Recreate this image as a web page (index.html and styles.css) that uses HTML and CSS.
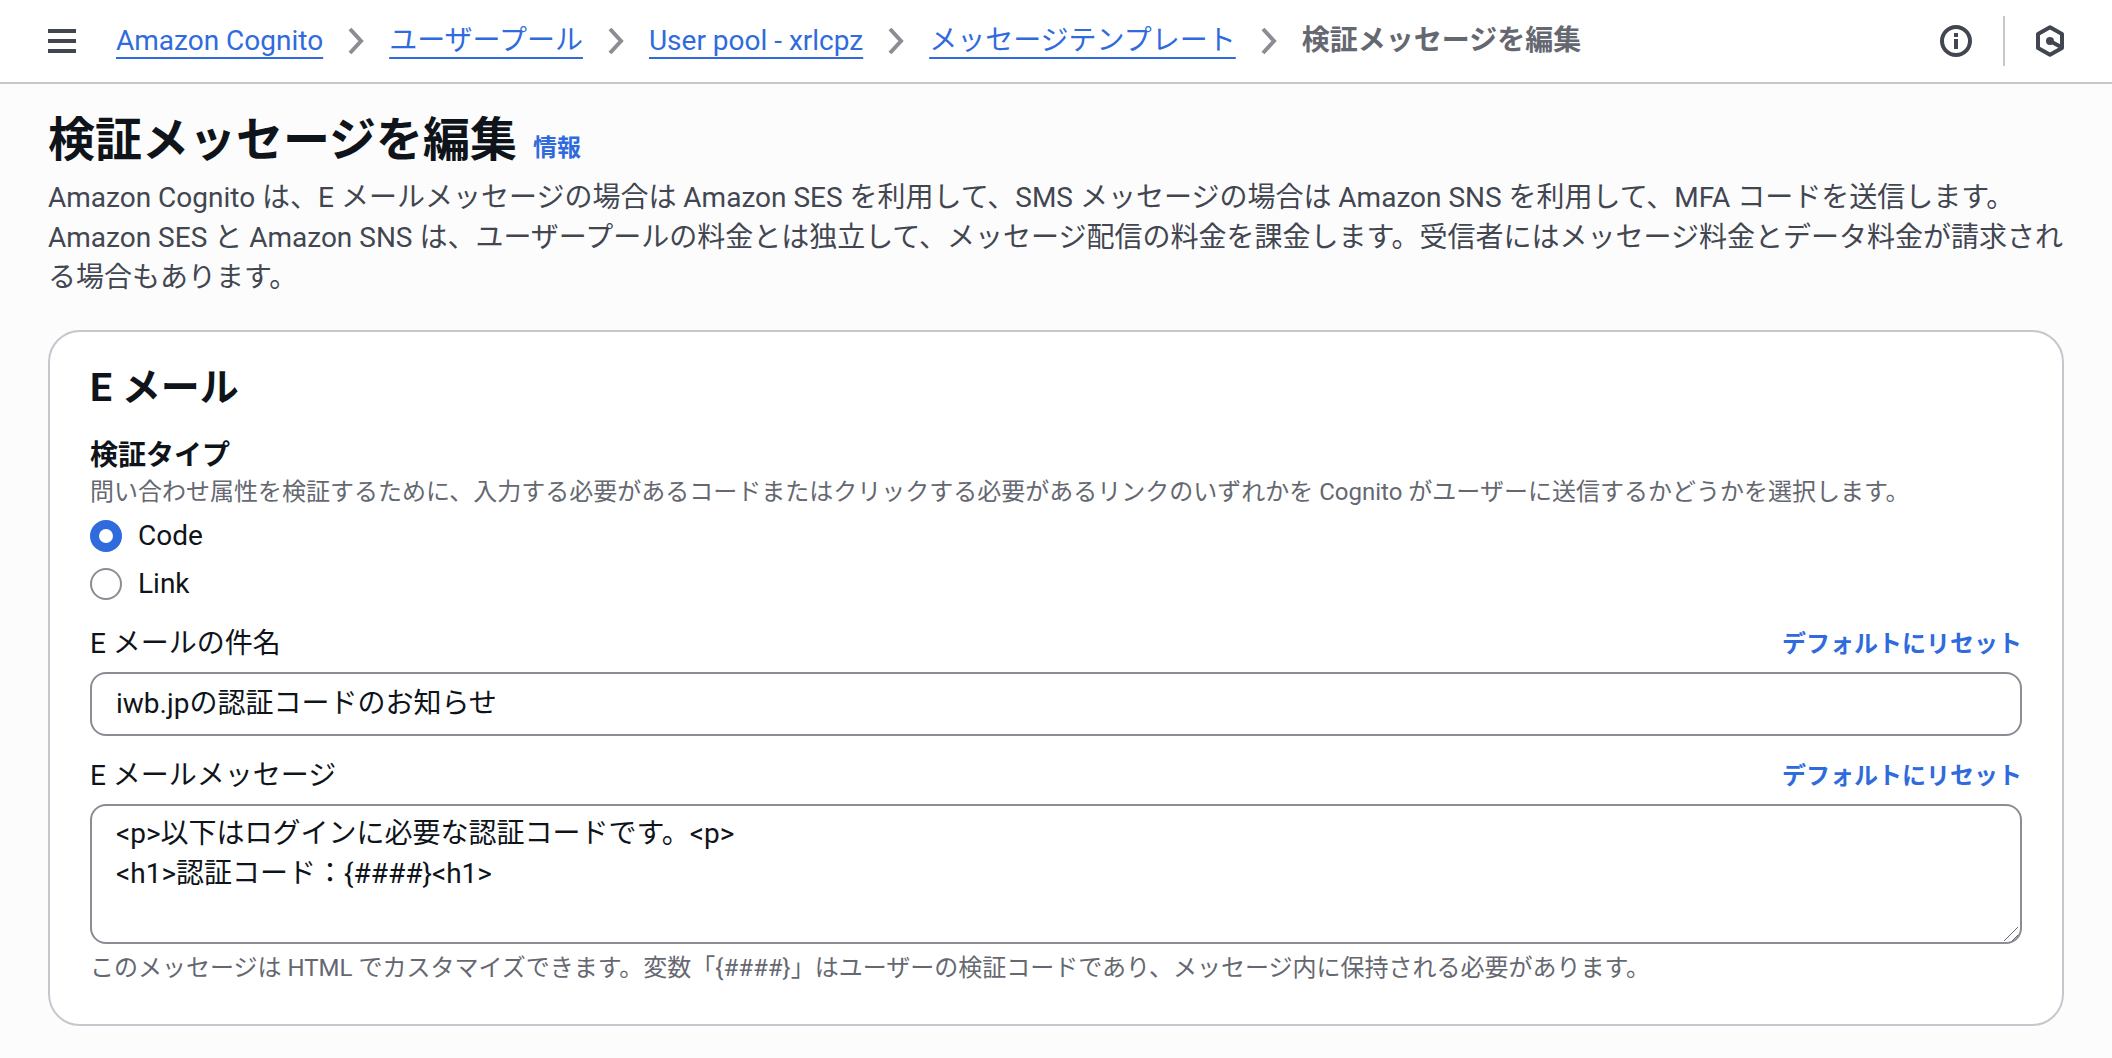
FILE: index.html
```html
<!DOCTYPE html>
<html lang="ja">
<head>
    <meta charset="UTF-8">
    <meta name="viewport" content="width=device-width, initial-scale=1.0">
    <title>検証メッセージを編集</title>
    <link rel="stylesheet" href="styles.css">
</head>
<body>
    <header class="topbar">
        <button type="button" class="icon-button" aria-label="メニュー">
            <svg width="28" height="28" viewBox="0 0 28 28" fill="none" stroke="currentColor" stroke-width="4">
                <path d="M0 4h28M0 14h28M0 24h28"/>
            </svg>
        </button>
        <nav class="breadcrumbs" aria-label="パンくず">
            <a href="#">Amazon Cognito</a>
            <svg class="chevron" width="16" height="28" viewBox="0 0 16 28"><path d="M2 2l11 12L2 26"/></svg>
            <a href="#">ユーザープール</a>
            <svg class="chevron" width="16" height="28" viewBox="0 0 16 28"><path d="M2 2l11 12L2 26"/></svg>
            <a href="#">User pool - xrlcpz</a>
            <svg class="chevron" width="16" height="28" viewBox="0 0 16 28"><path d="M2 2l11 12L2 26"/></svg>
            <a href="#">メッセージテンプレート</a>
            <svg class="chevron" width="16" height="28" viewBox="0 0 16 28"><path d="M2 2l11 12L2 26"/></svg>
            <span class="current">検証メッセージを編集</span>
        </nav>
        <div class="tools">
            <button type="button" class="icon-button" aria-label="情報">
                <svg width="32" height="32" viewBox="0 0 32 32" fill="none" stroke="currentColor" stroke-width="4">
                    <circle cx="16" cy="16" r="14"/>
                    <path d="M16 8v4M16 14v10"/>
                </svg>
            </button>
            <span class="divider"></span>
            <button type="button" class="icon-button" aria-label="設定">
                <svg width="28" height="32" viewBox="0 0 28 32" fill="none" stroke="currentColor" stroke-width="4">
                    <path d="M14 2.3l12 6.6v14.2l-12 6.6-12-6.6V8.9z" stroke-linejoin="round"/>
                    <path d="M14 16l11 6"/>
                    <circle cx="14" cy="16" r="4" fill="currentColor" stroke="none"/>
                </svg>
            </button>
        </div>
    </header>

    <main class="container">
        <div class="page-title">
            <h1>検証メッセージを編集</h1>
            <a href="#" class="action-link">情報</a>
        </div>
        <p class="page-description">Amazon Cognito は、E メールメッセージの場合は Amazon SES を利用して、SMS メッセージの場合は Amazon SNS を利用して、MFA コードを送信します。Amazon SES と Amazon SNS は、ユーザープールの料金とは独立して、メッセージ配信の料金を課金します。受信者にはメッセージ料金とデータ料金が請求される場合もあります。</p>

        <form class="card">
            <h2>E メール</h2>

            <fieldset class="radio-group">
                <legend>検証タイプ</legend>
                <p class="hint">問い合わせ属性を検証するために、入力する必要があるコードまたはクリックする必要があるリンクのいずれかを Cognito がユーザーに送信するかどうかを選択します。</p>
                <div class="radio-list">
                    <label class="radio"><input type="radio" name="verification" value="code" checked>Code</label>
                    <label class="radio"><input type="radio" name="verification" value="link">Link</label>
                </div>
            </fieldset>

            <div class="field">
                <div class="field-header">
                    <label for="subject">E メールの件名</label>
                    <a href="#" class="action-link">デフォルトにリセット</a>
                </div>
                <input type="text" id="subject" class="text-input" value="iwb.jpの認証コードのお知らせ">
            </div>

            <div class="field">
                <div class="field-header">
                    <label for="message">E メールメッセージ</label>
                    <a href="#" class="action-link">デフォルトにリセット</a>
                </div>
                <div class="textarea-wrap">
                    <textarea id="message" class="text-input" rows="3" spellcheck="false">&lt;p&gt;以下はログインに必要な認証コードです。&lt;p&gt;
&lt;h1&gt;認証コード：{####}&lt;h1&gt;</textarea>
                    <svg class="grip" width="16" height="16" viewBox="0 0 16 16"><path d="M1 15L15 1M9 15l6-6"/></svg>
                </div>
                <p class="hint">このメッセージは HTML でカスタマイズできます。変数「{####}」はユーザーの検証コードであり、メッセージ内に保持される必要があります。</p>
            </div>
        </form>
    </main>
</body>
</html>
```
FILE: styles.css
```css
* {
    box-sizing: border-box;
}

body {
    margin: 0;
    background-color: #fcfcfd;
    color: #0f141a;
    font-family: Roboto, "Noto Sans CJK JP", sans-serif;
    font-size: 28px;
    line-height: 40px;
}

h1, h2, p {
    margin: 0;
}

a {
    color: #2f6bdc;
}

.topbar {
    display: flex;
    align-items: center;
    gap: 40px;
    padding: 21px 48px;
    background-color: white;
    border-bottom: 2px solid #c6c6cd;
}

.icon-button {
    display: flex;
    padding: 0;
    border: none;
    background: none;
    color: #424650;
    cursor: pointer;
}

.breadcrumbs {
    flex: 1;
    display: flex;
    align-items: center;
    gap: 25px;
}

.breadcrumbs a {
    text-decoration-thickness: 2px;
    text-underline-offset: 7px;
    text-decoration-skip-ink: none;
}

.chevron {
    fill: none;
    stroke: #8c8c94;
    stroke-width: 4;
}

.current {
    color: #656871;
    font-weight: 700;
}

.tools {
    display: flex;
    align-items: center;
    gap: 31px;
}

.divider {
    width: 2px;
    height: 50px;
    margin: -5px 0;
    background-color: #c6c6cd;
}

.container {
    padding: 26px 48px 32px;
}

.page-title {
    display: flex;
    align-items: baseline;
    gap: 16px;
    margin-bottom: 8px;
}

h1 {
    font-size: 47px;
    line-height: 60px;
}

.action-link {
    font-size: 24px;
    line-height: 32px;
    font-weight: 700;
    text-decoration: none;
}

.page-description {
    color: #424650;
    margin-bottom: 32px;
}

.card {
    display: flex;
    flex-direction: column;
    gap: 20px;
    padding: 32px 40px 40px;
    background-color: white;
    border: 2px solid #c6c6cd;
    border-radius: 32px;
}

h2 {
    margin-bottom: 4px;
    font-size: 39px;
    line-height: 48px;
}

.radio-group {
    margin: 0;
    padding: 0;
    border: none;
}

legend {
    padding: 0;
    font-weight: 700;
}

.hint {
    color: #656871;
    font-size: 24px;
    line-height: 32px;
}

.radio-list {
    display: flex;
    flex-direction: column;
    align-items: flex-start;
    gap: 8px;
    margin-top: 8px;
}

.radio {
    display: flex;
    align-items: center;
    gap: 16px;
}

.radio input {
    appearance: none;
    width: 32px;
    height: 32px;
    margin: 0;
    background-color: white;
    border: 2px solid #8c8c94;
    border-radius: 50%;
}

.radio input:checked {
    border: 9px solid #2f6bdc;
}

.field {
    display: flex;
    flex-direction: column;
    gap: 8px;
}

.field-header {
    display: flex;
    align-items: center;
    justify-content: space-between;
}

.text-input {
    display: block;
    width: 100%;
    padding: 10px 24px;
    background-color: white;
    border: 2px solid #8c8c94;
    border-radius: 16px;
    color: inherit;
    font: inherit;
}

textarea.text-input {
    padding: 8px 24px;
    resize: none;
}

.textarea-wrap {
    position: relative;
}

.grip {
    position: absolute;
    right: 3px;
    bottom: 2px;
    fill: none;
    stroke: #656871;
    stroke-width: 1;
}
```
